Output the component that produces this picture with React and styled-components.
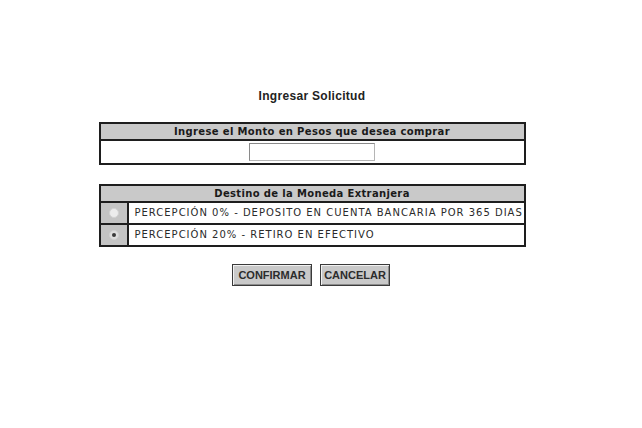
import React, { useState } from "react";
import styled, { createGlobalStyle } from "styled-components";

const Global = createGlobalStyle`
  html, body { margin: 0; padding: 0; background: #ffffff; }
  body { font-family: "DejaVu Sans", Verdana, sans-serif; }
`;

const Page = styled.div`
  width: 642px;
  height: 428px;
  box-sizing: border-box;
  padding: 89px 18px 0 0;
  display: flex;
  flex-direction: column;
  align-items: center;
`;

const Title = styled.h1`
  margin: 0 0 19px;
  font: bold 12px/14px "Liberation Sans", Arial, sans-serif;
  letter-spacing: 0.3px;
  color: #222;
`;

const Panel = styled.div`
  width: 427px;
  box-sizing: border-box;
  border: 2px solid #1e1e1e;
  margin-bottom: ${(p) => p.$gap || 0}px;
  display: flex;
  flex-direction: column;
`;

const PanelHeader = styled.div`
  height: 15px;
  background: #c9c9c9;
  border-bottom: 2px solid #1e1e1e;
  display: flex;
  align-items: center;
  justify-content: center;
  font: bold 10px/1 "DejaVu Sans", Verdana, sans-serif;
  letter-spacing: 0.35px;
  color: #1a1a1a;
`;

const InputRow = styled.div`
  height: 22px;
  display: flex;
  align-items: center;
  justify-content: center;
`;

const AmountInput = styled.input`
  width: 126px;
  height: 18px;
  box-sizing: border-box;
  margin: 0;
  padding: 0 3px;
  border: 1px solid #b5b5b5;
  border-top-color: #8a8a8a;
  border-left-color: #8a8a8a;
  background: #fff;
  outline: none;
`;

const OptionRow = styled.label`
  display: grid;
  grid-template-columns: 28px 1fr;
  box-sizing: border-box;
  height: ${(p) => p.$h}px;
  border-bottom: ${(p) => (p.$last ? "none" : "2px solid #1e1e1e")};
  cursor: pointer;
`;

const RadioCell = styled.span`
  background: #c4c4c4;
  border-right: 2px solid #1e1e1e;
  display: flex;
  align-items: center;
  justify-content: center;
`;

const RadioDot = styled.span`
  width: 10px;
  height: 10px;
  border-radius: 50%;
  background: ${(p) => (p.$checked ? "#dedede" : "#ececec")};
  border: 1px solid #d2d2d2;
  box-sizing: border-box;
  display: flex;
  align-items: center;
  justify-content: center;
  &::after {
    content: "";
    width: 4px;
    height: 4px;
    border-radius: 50%;
    background: ${(p) => (p.$checked ? "#3a3a3a" : "transparent")};
  }
`;

const OptionText = styled.span`
  display: flex;
  align-items: center;
  padding-left: 6px;
  font: 10px/1 "DejaVu Sans", Verdana, sans-serif;
  letter-spacing: 1px;
  color: #2a2a2a;
  white-space: nowrap;
`;

const Buttons = styled.div`
  display: flex;
  gap: 8px;
  margin-left: -2px;
`;

const Button = styled.button`
  width: ${(p) => p.$w}px;
  height: 22px;
  margin: 0;
  padding: 0;
  box-sizing: border-box;
  background: #c9c9c9;
  border: 1px solid #3a3a3a;
  box-shadow: inset 1px 1px 0 #f2f2f2, inset -1px -1px 0 #8c8c8c;
  font: bold 11px/1 "Liberation Sans", Arial, sans-serif;
  color: #2c2c2c;
  cursor: pointer;
`;

const options = [
  "PERCEPCIÓN 0% - DEPOSITO EN CUENTA BANCARIA POR 365 DIAS",
  "PERCEPCIÓN 20% - RETIRO EN EFECTIVO",
];

export default function App() {
  const [sel, setSel] = useState(1);
  return (
    <>
      <Global />
      <Page>
        <Title>Ingresar Solicitud</Title>
        <Panel $gap={19}>
          <PanelHeader>Ingrese el Monto en Pesos que desea comprar</PanelHeader>
          <InputRow>
            <AmountInput type="text" />
          </InputRow>
        </Panel>
        <Panel $gap={17}>
          <PanelHeader>Destino de la Moneda Extranjera</PanelHeader>
          {options.map((o, i) => (
            <OptionRow
              key={o}
              $h={i === options.length - 1 ? 20 : 22}
              $last={i === options.length - 1}
              onClick={() => setSel(i)}
            >
              <RadioCell>
                <RadioDot $checked={sel === i} />
              </RadioCell>
              <OptionText>{o}</OptionText>
            </OptionRow>
          ))}
        </Panel>
        <Buttons>
          <Button $w={80}>CONFIRMAR</Button>
          <Button $w={70}>CANCELAR</Button>
        </Buttons>
      </Page>
    </>
  );
}
